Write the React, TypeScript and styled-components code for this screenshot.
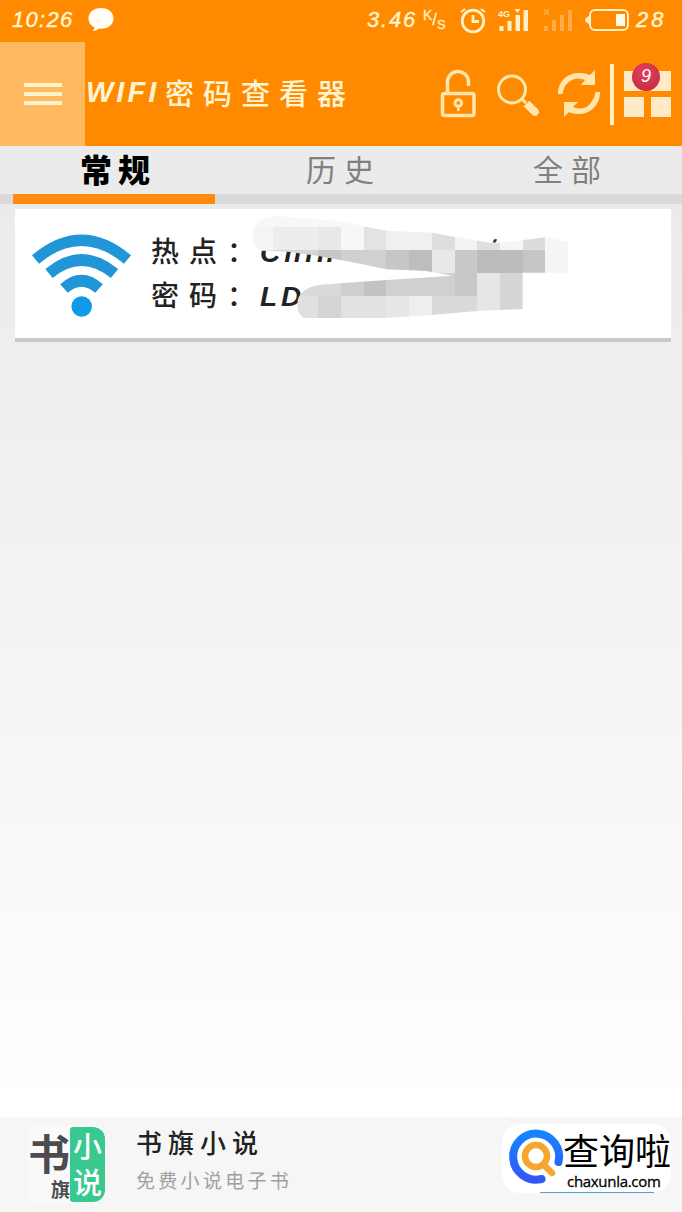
import React from "react";
import styled, { createGlobalStyle } from "styled-components";

const GlobalStyle = createGlobalStyle`
  * { box-sizing: border-box; }
  body { margin: 0; background: #fff; }
  svg { display: block; flex: none; overflow: visible; }
`;

const cream = "#fff0c8";

const Screen = styled.div`
  width: 682px;
  height: 1212px;
  display: flex;
  flex-direction: column;
  overflow: hidden;
  font-family: "Noto Sans CJK SC", sans-serif;
  white-space: nowrap;
`;

const StatusBar = styled.div`
  height: 42px;
  background: #ff8a00;
  display: flex;
  align-items: center;
  padding: 0 13px 2px 12px;
`;

const StatusText = styled.span<{ $w: number; $gap?: number }>`
  width: ${(p) => p.$w}px;
  font: italic 22px/24px "Liberation Sans", sans-serif;
  letter-spacing: ${(p) => p.$gap ?? 1.3}px;
  color: #fff5d0;
  -webkit-text-stroke: 0.4px #fff5d0;
`;

const Spacer = styled.div`
  flex: 1;
`;

const StatusIcons = styled.div`
  display: flex;
  align-items: center;
`;

const Rate = styled.span`
  display: flex;
  width: 37px;
  margin-left: 6px;
  font: 14px/15px "Liberation Sans", sans-serif;
  color: ${cream};
  -webkit-text-stroke: 0.3px ${cream};
`;

const RatePart = styled.span<{ $drop: number; $size: number }>`
  padding-top: ${(p) => p.$drop}px;
  font-size: ${(p) => p.$size}px;
`;

const Header = styled.header`
  height: 104px;
  background: #ff8a00;
  display: flex;
`;

const MenuButton = styled.div`
  width: 85px;
  background: #ffba60;
  display: flex;
  flex-direction: column;
  align-items: center;
  justify-content: center;
  gap: 5px;
`;

const MenuLine = styled.i`
  width: 38px;
  height: 4px;
  background: #fff1ca;
`;

const Title = styled.h1`
  margin: 0;
  width: 355px;
  display: flex;
  align-items: center;
  font-size: 29px;
  font-weight: 500;
  letter-spacing: 9px;
  color: #fff4d2;
  padding-bottom: 4px;
`;

const TitleLatin = styled.span`
  width: 80px;
  font: italic bold 29px "Liberation Sans", sans-serif;
  letter-spacing: 3px;
  padding-left: 1px;
`;

const Actions = styled.div`
  display: flex;
  height: 62px;
  margin-top: 21px;
  align-items: center;
`;

const Divider = styled.i`
  width: 4px;
  height: 61px;
  margin: 0 10px;
  background: #fff0c4;
`;

const AppsButton = styled.div`
  position: relative;
  display: grid;
  grid-template-columns: 20px 20px;
  grid-auto-rows: 20px;
  gap: 6px 7px;
`;

const Square = styled.i`
  background: #ffebc8;
`;

const Badge = styled.b`
  position: absolute;
  left: 8px;
  top: -8px;
  width: 28px;
  height: 28px;
  border-radius: 50%;
  background: radial-gradient(circle at 45% 30%, #e3405a, #c42840);
  color: #fff;
  text-align: center;
  font: italic 18px/27px "Liberation Sans", sans-serif;
`;

const Tabs = styled.nav`
  height: 58px;
  background: linear-gradient(#ebebeb 48px, #dadada 48px);
  display: flex;
`;

const Tab = styled.div<{ $active?: boolean; $ml: number; $w: number; $indent: number }>`
  height: 58px;
  width: ${(p) => p.$w}px;
  margin-left: ${(p) => p.$ml}px;
  padding-left: ${(p) => p.$indent}px;
  border-bottom: 10px solid ${(p) => (p.$active ? "#ff8a0c" : "transparent")};
  font-size: ${(p) => (p.$active ? 32 : 30)}px;
  line-height: 45px;
  letter-spacing: ${(p) => (p.$active ? 6 : 8)}px;
  font-weight: ${(p) => (p.$active ? 900 : 400)};
  color: ${(p) => (p.$active ? "#000" : "#808080")};
`;

const Content = styled.main`
  height: 913px;
  padding: 5px 11px 0 15px;
  background: linear-gradient(#ebebeb, #f3f3f3 45%, #ffffff);
`;

const Card = styled.section`
  position: relative;
  height: 133px;
  background: #fff;
  border-bottom: 4px solid #c9c9c9;
  display: flex;
  padding: 26px 0 0 16px;
`;

const Lines = styled.div`
  margin: -6px 0 0 20px;
`;

const Line = styled.div`
  display: flex;
  height: 44px;
  line-height: 42px;
  font-size: 28px;
  font-weight: 500;
  color: #222;
`;

const Label = styled.span`
  width: 109px;
  letter-spacing: 10px;
`;

const Value = styled.span`
  font: italic bold 28px/48px "Liberation Sans", sans-serif;
  letter-spacing: 4px;
`;

const Mask = styled.svg`
  position: absolute;
  left: 225px;
  top: -9px;
`;

const Footer = styled.footer`
  height: 95px;
  background: #f6f6f6;
  display: flex;
  padding: 7px 11px 0 28px;
`;

const BookIcon = styled.div`
  width: 77px;
  height: 78px;
  margin-top: 1px;
  border-radius: 12px;
  background: #fafafa;
  display: flex;
  justify-content: space-between;
`;

const BookLeft = styled.div`
  width: 42px;
  display: flex;
  flex-direction: column;
  align-items: flex-end;
  color: #4c4b50;
  font-size: 42px;
  line-height: 54px;
  font-weight: 700;
`;

const BookSmall = styled.span`
  font-size: 19px;
  line-height: 20px;
`;

const BookRight = styled.div`
  width: 35px;
  height: 75px;
  margin-top: 2px;
  border-radius: 3px 12px 12px 3px;
  background: #38c890;
  color: #fff;
  font-size: 29px;
  line-height: 36px;
  font-weight: 500;
  display: flex;
  flex-direction: column;
  align-items: center;
`;

const BookText = styled.div`
  margin-left: 31px;
  width: 355px;
`;

const BookTitle = styled.div`
  font-size: 26px;
  line-height: 36px;
  font-weight: 500;
  letter-spacing: 6px;
  color: #222;
`;

const BookSub = styled.div`
  padding-top: 2px;
  font-size: 19px;
  line-height: 36px;
  letter-spacing: 3.3px;
  color: #a0a0a0;
`;

const SiteLogo = styled.div`
  width: 169px;
  height: 69px;
  margin-left: 11px;
  border-radius: 18px;
  background: #fff;
  display: flex;
  padding: 5px 0 0 6px;
`;

const SiteText = styled.div`
  width: 110px;
  color: #000;
`;

const SiteName = styled.div`
  font-size: 36px;
  line-height: 40px;
  height: 44px;
`;

const SiteUrl = styled.div`
  margin-left: 4px;
  font: 15px/16px "Open Sans", sans-serif;
  letter-spacing: -0.3px;
  -webkit-text-stroke: 0.3px #000;
`;

const SiteLine = styled.div`
  width: 114px;
  height: 1px;
  margin: 3px 0 0 -23px;
  background: #45a5e0;
`;

type Cell = [number, number, number, number, string];
const cells: Cell[] = [
  [30, 40, 960, 40, "#f7f7f7"],
  [30, 80, 68, 70, "#f5f5f5"], [98, 80, 137, 70, "#ededed"], [235, 80, 68, 70, "#e8e8e8"],
  [303, 80, 69, 70, "#f7f7f7"], [372, 80, 66, 70, "#e3e3e3"], [438, 80, 138, 70, "#f0f0f0"],
  [576, 80, 68, 70, "#dedede"], [644, 80, 67, 70, "#f3f3f3"], [711, 80, 69, 70, "#e0e0e0"],
  [780, 80, 68, 70, "#f5f5f5"], [848, 80, 68, 70, "#dcdcdc"], [916, 80, 69, 138, "#f5f5f5"],
  [30, 150, 205, 68, "#d6d6d6"], [235, 150, 68, 68, "#c6c6c6"], [303, 150, 135, 68, "#d0d0d0"],
  [438, 150, 69, 68, "#c6c6c6"], [507, 150, 69, 68, "#bdbdbd"], [576, 150, 68, 68, "#e8e8e8"],
  [644, 150, 67, 68, "#c9c9c9"], [711, 150, 137, 68, "#bcbcbc"], [848, 150, 68, 68, "#c6c6c6"],
  [160, 218, 143, 69, "#dadada"], [303, 218, 69, 69, "#cfcfcf"], [372, 218, 66, 69, "#c2c2c2"],
  [438, 218, 206, 69, "#d0d0d0"], [644, 218, 67, 69, "#c8c8c8"], [711, 218, 69, 136, "#e6e6e6"],
  [780, 218, 68, 136, "#d6d6d6"],
  [160, 287, 75, 70, "#e0e0e0"], [235, 287, 68, 70, "#d4d4d4"], [303, 287, 135, 70, "#e2e2e2"],
  [438, 287, 69, 70, "#e6e6e6"], [507, 287, 69, 70, "#eeeeee"], [576, 287, 135, 70, "#dadada"],
];

const PixelMask = () => (
  <Mask width="340" height="150" viewBox="0 0 1020 450">
    <defs>
      <clipPath id="stroke">
        <path d="M60 150Q36 138 38 105Q42 50 110 48L300 64L372 79L438 92L576 98L650 112L760 130L850 120L916 112L985 125V218H848V327L711 333L576 345L438 354H192Q170 340 172 310Q174 265 240 254L440 240L638 227L560 213L440 208L330 185L235 168L150 156Z" />
      </clipPath>
    </defs>
    <path d="M50 90H330V152H50z" fill="#fff" />
    <path d="M206 245H330V330H206z" fill="#fff" />
    <g clipPath="url(#stroke)" shapeRendering="crispEdges">
      {cells.map(([x, y, w, h, fill], i) => (
        <rect key={i} x={x} y={y} width={w} height={h} fill={fill} />
      ))}
    </g>
    <path d="M758 128l4-10 9 0-3 9z" fill="#333" />
  </Mask>
);

export default function App() {
  return (
    <Screen>
      <GlobalStyle />
      <StatusBar>
        <StatusText $w={76}>10:26</StatusText>
        <svg width="26" height="24" viewBox="0 0 26 24">
          <path d="M13 0C5.500 0 .5 4.500 .5 10.500c0 4 2 7 6 9-.2 1.500-1 2.500-2 3.500 3 0 5-1 6.500-2.500C19.500 21.500 25.500 17 25.500 10.500 25.500 4.500 20.500 0 13 0z" fill="#fffdf5" />
        </svg>
        <Spacer />
        <StatusIcons>
          <StatusText $w={50} $gap={1.8}>3.46</StatusText>
          <Rate>
            <RatePart $drop={0} $size={14}>K</RatePart>
            <RatePart $drop={4} $size={17}>/</RatePart>
            <RatePart $drop={9} $size={13}>S</RatePart>
          </Rate>
          <svg width="38" height="25" viewBox="0 0 38 25" fill="none" stroke={cream} strokeWidth="2.800">
            <circle cx="13" cy="13" r="10.800" />
            <path d="M13 7v6.500h6" />
            <path d="M1 4l4-3M21 1l4 3" strokeWidth="2" />
          </svg>
          <svg width="32" height="24" viewBox="0 0 32 24" fill={cream}>
            <text x="0" y="9" fontFamily="Liberation Sans" fontWeight="bold" fontSize="9">4G</text>
            <rect x="1.500" y="18" width="4" height="5" />
            <rect x="9.500" y="13" width="4" height="10" />
            <rect x="17.500" y="7" width="4.500" height="16" />
            <rect x="25.500" y="2" width="4.500" height="21" />
            <path d="M16.500 1h6l-3 4z" />
          </svg>
          <svg width="56" height="24" viewBox="-13 0 56 24" fill="#ffad4a">
            <rect x="1" y="18" width="4" height="5" />
            <rect x="9" y="12" width="4" height="11" />
            <rect x="17" y="7" width="4" height="16" />
            <rect x="25" y="2" width="4" height="21" />
            <path d="M1 1l5 6M6 1L1 7" stroke="#ffad4a" strokeWidth="1.500" />
          </svg>
          <svg width="50" height="24" viewBox="0 0 50 24">
            <rect x="4" y="2" width="38" height="20" rx="5" fill="none" stroke={cream} strokeWidth="2" />
            <path d="M4 7.500Q-1 10-1 12t5 4.500z" fill={cream} />
            <rect x="30" y="6" width="9" height="12" fill="#fffbe8" />
          </svg>
          <StatusText $w={33} $gap={3}>28</StatusText>
        </StatusIcons>
      </StatusBar>

      <Header>
        <MenuButton>
          <MenuLine />
          <MenuLine />
          <MenuLine />
        </MenuButton>
        <Title>
          <TitleLatin>WIFI</TitleLatin>密码查看器
        </Title>
        <Actions>
          <svg width="57" height="48" viewBox="440 70 57 48" fill="none" stroke="#ffe6ac" strokeWidth="3.500">
            <rect x="442.500" y="93.500" width="31.500" height="22" rx="2" />
            <path d="M447.500 93V83a10.500 10.500 0 0 1 21-2v5" />
            <circle cx="458.300" cy="103" r="3.300" strokeWidth="3" />
            <path d="M458.300 106v5" strokeWidth="2.500" />
          </svg>
          <svg width="61" height="48" viewBox="497 70 61 48" fill="none" stroke="#ffe6ac">
            <circle cx="512" cy="89.500" r="13.500" strokeWidth="3" />
            <path d="M522 99l4 4" strokeWidth="3" />
            <path d="M526.500 103.500l8.500 8.500" strokeWidth="8" strokeLinejoin="round" />
            <path d="M534 111l1 1" strokeWidth="7.500" strokeLinecap="round" />
          </svg>
          <svg width="42" height="48" viewBox="558 70 42 48" fill="#ffe6ac">
            <path d="M558 94C558 80 569 72 581 73Q587 73.500 590 75L595 70V85H581L585 80Q573 75 565 86Q563 90 562.500 94Z" />
            <path d="M600 92C600 106 589 115 577 114Q571 113.500 569 112L564 117V102H578L573 107Q586 112 592 101Q595 97 595.500 92Z" />
          </svg>
          <Divider />
          <AppsButton>
            <Square />
            <Square />
            <Square />
            <Square />
            <Badge>9</Badge>
          </AppsButton>
        </Actions>
      </Header>

      <Tabs>
        <Tab $active $ml={13} $w={202} $indent={67}>常规</Tab>
        <Tab $ml={12} $w={215} $indent={79}>历史</Tab>
        <Tab $ml={12} $w={215} $indent={79}>全部</Tab>
      </Tabs>

      <Content>
        <Card>
          <svg width="100" height="83" viewBox="31 235 100 83" fill="none" stroke="#2196d6">
            <path d="M35.500 259.500Q81.500 221 127.500 259.500" strokeWidth="11" />
            <path d="M49 273.500Q81.500 246.500 114.500 273.500" strokeWidth="11.500" />
            <path d="M64 288.500Q81.500 273 99 288.500" strokeWidth="11.500" />
            <circle cx="81.700" cy="306.500" r="10.300" fill="#0f9be5" stroke="none" />
          </svg>
          <Lines>
            <Line>
              <Label>热点：</Label>
              <Value>Chin</Value>
            </Line>
            <Line>
              <Label>密码：</Label>
              <Value>LD</Value>
            </Line>
          </Lines>
          <PixelMask />
        </Card>
      </Content>

      <Footer>
        <BookIcon>
          <BookLeft>
            书<BookSmall>旗</BookSmall>
          </BookLeft>
          <BookRight>
            <span>小</span>
            <span>说</span>
          </BookRight>
        </BookIcon>
        <BookText>
          <BookTitle>书旗小说</BookTitle>
          <BookSub>免费小说电子书</BookSub>
        </BookText>
        <SiteLogo>
          <svg width="55" height="56" viewBox="508 1129 55 56" fill="none" strokeLinecap="round">
            <defs>
              <linearGradient id="ring" x1="0" y1="0" x2="0" y2="1">
                <stop offset="0" stopColor="#1684ff" />
                <stop offset="1" stopColor="#3158f5" />
              </linearGradient>
            </defs>
            <path d="M541.500 1179A23 23 0 1 1 558.500 1162" stroke="url(#ring)" strokeWidth="8" />
            <circle cx="536" cy="1156" r="11" stroke="#f6a52d" strokeWidth="6.500" />
            <path d="M544 1165l8 8" stroke="#f6a52d" strokeWidth="6.500" />
          </svg>
          <SiteText>
            <SiteName>查询啦</SiteName>
            <SiteUrl>chaxunla.com</SiteUrl>
            <SiteLine />
          </SiteText>
        </SiteLogo>
      </Footer>
    </Screen>
  );
}
